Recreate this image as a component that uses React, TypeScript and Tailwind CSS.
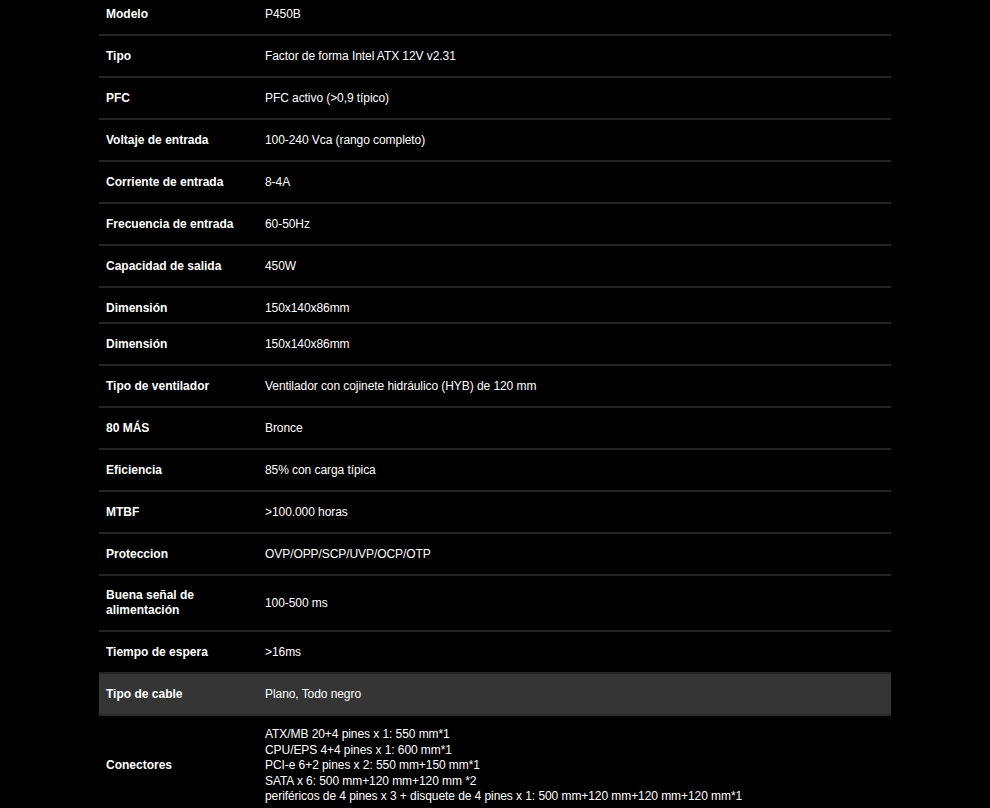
const specs: { label: string; value: string; row?: string; gray?: boolean }[] = [
  { label: 'Modelo', value: 'P450B' },
  { label: 'Tipo', value: 'Factor de forma Intel ATX 12V v2.31' },
  { label: 'PFC', value: 'PFC activo (>0,9 típico)' },
  { label: 'Voltaje de entrada', value: '100-240 Vca (rango completo)' },
  { label: 'Corriente de entrada', value: '8-4A' },
  { label: 'Frecuencia de entrada', value: '60-50Hz' },
  { label: 'Capacidad de salida', value: '450W' },
  { label: 'Dimensión', value: '150x140x86mm', row: 'h-[36px] items-start pt-[13px]' },
  { label: 'Dimensión', value: '150x140x86mm' },
  { label: 'Tipo de ventilador', value: 'Ventilador con cojinete hidráulico (HYB) de 120 mm' },
  { label: '80 MÁS', value: 'Bronce' },
  { label: 'Eficiencia', value: '85% con carga típica' },
  { label: 'MTBF', value: '>100.000 horas' },
  { label: 'Proteccion', value: 'OVP/OPP/SCP/UVP/OCP/OTP' },
  { label: 'Buena señal de alimentación', value: '100-500 ms', row: 'h-[56px] items-center' },
  { label: 'Tiempo de espera', value: '>16ms' },
  { label: 'Tipo de cable', value: 'Plano, Todo negro', gray: true },
]

const connectors = [
  'ATX/MB 20+4 pines x 1: 550 mm*1',
  'CPU/EPS 4+4 pines x 1: 600 mm*1',
  'PCI-e 6+2 pines x 2: 550 mm+150 mm*1',
  'SATA x 6: 500 mm+120 mm+120 mm *2',
  'periféricos de 4 pines x 3 + disquete de 4 pines x 1: 500 mm+120 mm+120 mm+120 mm*1',
]

export default function App() {
  return (
    <div className="min-h-screen bg-black overflow-hidden font-['Liberation_Sans',Arial,sans-serif] text-[12px] text-white">
      <div className="mx-[99px] -mt-[6px]">
        {specs.map((s, i) => (
          <div
            key={i}
            className={`flex border-b-2 ${s.row ?? 'h-[42px] items-center'} ${
              s.gray ? 'bg-[#353535] border-[#2b2b2b]' : 'border-[#242424]'
            }`}
          >
            <div className={`w-[166px] shrink-0 pl-[7px] pr-[10px] font-bold leading-[15px] ${s.row ? '' : 'mt-[1px]'}`}>
              {s.label}
            </div>
            <div className={`flex-1 leading-[15px] tracking-[-0.07px] ${s.row ? '' : 'mt-[1px]'}`}>{s.value}</div>
          </div>
        ))}

        {/* Connectors */}
        <div className="flex items-center pt-[11px] pb-[12px]">
          <div className="w-[166px] shrink-0 pl-[7px] font-bold -mt-[2px]">Conectores</div>
          <div className="flex-1 leading-[15.5px] tracking-[-0.07px]">
            {connectors.map((c) => (
              <div key={c}>{c}</div>
            ))}
          </div>
        </div>
      </div>
    </div>
  )
}
